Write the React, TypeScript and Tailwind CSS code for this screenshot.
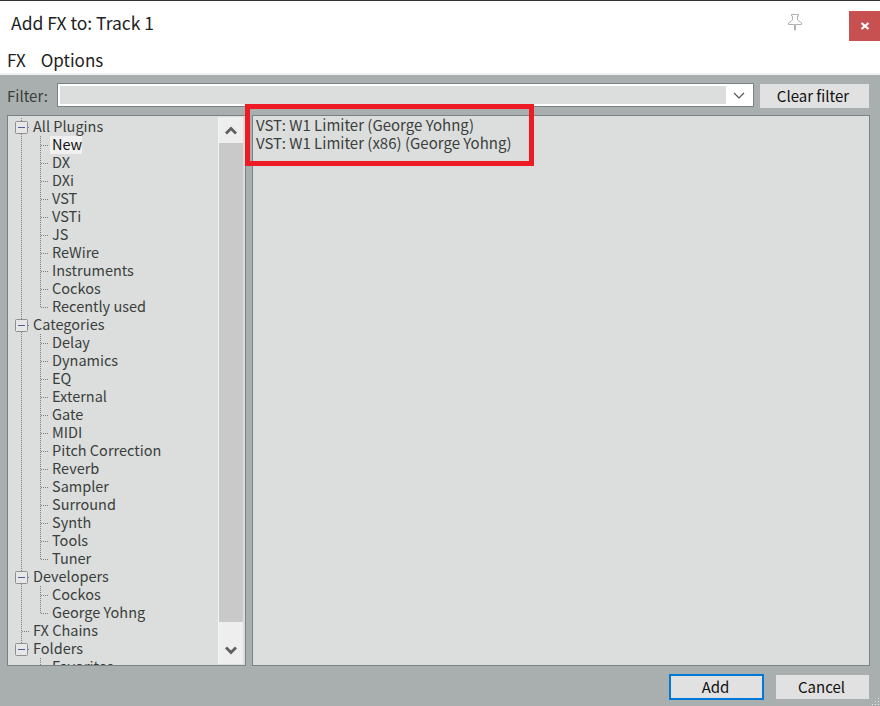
const GROUPS = [
  {
    name: 'All Plugins',
    children: ['New', 'DX', 'DXi', 'VST', 'VSTi', 'JS', 'ReWire', 'Instruments', 'Cockos', 'Recently used'],
  },
  {
    name: 'Categories',
    children: ['Delay', 'Dynamics', 'EQ', 'External', 'Gate', 'MIDI', 'Pitch Correction', 'Reverb', 'Sampler', 'Surround', 'Synth', 'Tools', 'Tuner'],
  },
  { name: 'Developers', children: ['Cockos', 'George Yohng'] },
  { name: 'FX Chains', children: [] as string[], leaf: true },
  { name: 'Folders', children: ['Favorites'], last: true },
];

const GUIDE = '#7d7d7d';

function GroupGuide({ leaf, last }: { leaf?: boolean; last?: boolean }) {
  return (
    <svg width="25" height="18" className="shrink-0">
      {!last && <line x1="13.5" y1="0" x2="13.5" y2="18" stroke={GUIDE} strokeDasharray="1 1" />}
      {last && <line x1="13.5" y1="0" x2="13.5" y2="4" stroke={GUIDE} strokeDasharray="1 1" />}
      {leaf ? (
        <line x1="14" y1="9.5" x2="22" y2="9.5" stroke={GUIDE} strokeDasharray="1 1" />
      ) : (
        <>
          <rect x="7.5" y="3.5" width="12" height="12" rx="1" fill="#e6e7e6" stroke="#8f8f8f" />
          <line x1="10" y1="9.5" x2="17" y2="9.5" stroke="#4a5f9c" />
          <line x1="20" y1="9.5" x2="22" y2="9.5" stroke={GUIDE} strokeDasharray="1 1" />
        </>
      )}
    </svg>
  );
}

function ChildGuide({ parentLine, end }: { parentLine: boolean; end: boolean }) {
  return (
    <svg width="42" height="18" className="shrink-0">
      {parentLine && <line x1="13.5" y1="0" x2="13.5" y2="18" stroke={GUIDE} strokeDasharray="1 1" />}
      <line x1="32.5" y1="0" x2="32.5" y2={end ? 9.5 : 18} stroke={GUIDE} strokeDasharray="1 1" />
      <line x1="33" y1="9.5" x2="41" y2="9.5" stroke={GUIDE} strokeDasharray="1 1" />
    </svg>
  );
}

function Tree() {
  return (
    <div className="flex-1 overflow-hidden pt-[2px] text-[14.5px] leading-[16px]">
      {GROUPS.map((g) => (
        <div key={g.name}>
          <div className="flex h-[18px] items-start">
            <GroupGuide leaf={g.leaf} last={g.last} />
            <span className="whitespace-nowrap">{g.name}</span>
          </div>
          {g.children.map((c, i) => (
            <div key={c} className="flex h-[18px] items-start">
              <ChildGuide parentLine={!g.last} end={i === g.children.length - 1} />
              {c === 'New' ? (
                <span className="h-[18px] w-[32px] bg-[#eff0ef] pl-[2px] text-[#111]">{c}</span>
              ) : (
                <span className="whitespace-nowrap pl-[2px]">{c}</span>
              )}
            </div>
          ))}
        </div>
      ))}
    </div>
  );
}

function Scrollbar() {
  return (
    <div className="my-[1px] mr-[2px] flex w-[25px] shrink-0 flex-col border-l border-[#f4f4f4] bg-[#eeeeee]">
      <div className="flex h-[26px] items-center justify-center">
        <svg width="12" height="9" viewBox="0 0 12 9">
          <path d="M1 7.5 L6 2.5 L11 7.5" fill="none" stroke="#606060" strokeWidth="2.8" />
        </svg>
      </div>
      <div className="h-[479px] bg-[#c9c9c9]" />
      <div className="flex flex-1 items-end justify-center pb-[9px]">
        <svg width="12" height="9" viewBox="0 0 12 9">
          <path d="M1 1.5 L6 6.5 L11 1.5" fill="none" stroke="#606060" strokeWidth="2.8" />
        </svg>
      </div>
    </div>
  );
}

export default function App() {
  return (
    <div className="relative flex h-[706px] w-[880px] flex-col overflow-hidden bg-[#a9afae] font-['Noto_Sans_CJK_JP','Liberation_Sans',sans-serif] text-[15px] leading-[18px] text-[#3a3e3c]">
      {/* Title + menu */}
      <div className="h-[75px] shrink-0 border-t border-[#333] border-b-2 border-b-[#f0f0f0] bg-white text-[#222]">
        <div className="flex h-[48px] items-start">
          <span className="mt-[10px] ml-[11px] text-[17.5px] leading-[24px]">Add FX to: Track 1</span>
          <svg width="18" height="20" viewBox="0 0 18 20" className="mt-[12px] ml-auto">
            <path
              d="M5.5 1.5 H12.5 V3 H11.5 V7 L15.5 10 V11.5 H9.5 V16 L9 17.5 L8.5 16 V11.5 H2.5 V10 L6.5 7 V3 H5.5 Z"
              fill="#fff"
              stroke="#b0b0b0"
            />
          </svg>
          <div className="mt-[10px] ml-[45px] mr-0 flex h-[30px] w-[31px] items-center justify-center bg-[#c75050]">
            <svg width="10" height="10" viewBox="0 0 10 10">
              <path d="M1.5 2 L8.5 8 M8.5 2 L1.5 8" stroke="#fff" strokeWidth="2.2" />
            </svg>
          </div>
        </div>
        <div className="flex gap-[15px] pl-[7px] text-[17px] leading-[22px]">
          <span>FX</span>
          <span>Options</span>
        </div>
      </div>

      {/* Filter row */}
      <div className="flex h-[40px] shrink-0 items-start pt-[8px] pl-[7px]">
        <span className="mt-[4px] w-[50px]">Filter:</span>
        <div className="flex h-[24px] w-[697px] border border-[#7a8285] bg-white p-[2px]">
          <div className="w-[666px] bg-[#dcdedd]" />
          <div className="flex flex-1 items-center justify-center">
            <svg width="12" height="7" viewBox="0 0 12 7">
              <path d="M1 1 L6 6 L11 1" fill="none" stroke="#555" strokeWidth="1.2" />
            </svg>
          </div>
        </div>
        <button className="mt-[1px] ml-[6px] flex h-[24px] w-[109px] items-center justify-center bg-[#e1e1e1] pr-[3px] text-[#111]">
          Clear filter
        </button>
      </div>

      {/* Panels */}
      <div className="flex h-[551px] shrink-0 gap-[6px] pr-[10px] pl-[7px]">
        <div className="flex w-[239px] shrink-0 border border-[#7a8285] bg-[#dcdedd]">
          <Tree />
          <Scrollbar />
        </div>
        <div className="flex-1 border border-[#7a8285] bg-[#dcdedd] pl-[3px]">
          <div>VST: W1 Limiter (George Yohng)</div>
          <div>VST: W1 Limiter (x86) (George Yohng)</div>
        </div>
      </div>

      {/* Footer */}
      <div className="flex flex-1 items-start justify-end gap-[12px] pt-[8px] pr-[11px] text-[#111]">
        <button className="flex h-[26px] w-[95px] items-center justify-center border-2 border-[#0078d7] bg-[#e1e1e1] pr-[2px]">
          Add
        </button>
        <button className="mt-[1px] flex h-[24px] w-[93px] items-center justify-center bg-[#e1e1e1] pr-[2px]">
          Cancel
        </button>
      </div>

      {/* Resize grip */}
      <svg width="8" height="8" viewBox="0 0 8 8" className="absolute right-0 bottom-0">
        <path d="M6 0h1v1H6z M3 3h1v1H3z M6 3h1v1H6z M0 6h1v1H0z M3 6h1v1H3z M6 6h1v1H6z" fill="#e6e6e6" />
      </svg>

      {/* Red annotation */}
      <div className="pointer-events-none absolute top-[104px] left-[245px] h-[62px] w-[289px] border-[5px] border-[#ed1c24]" />
    </div>
  );
}
